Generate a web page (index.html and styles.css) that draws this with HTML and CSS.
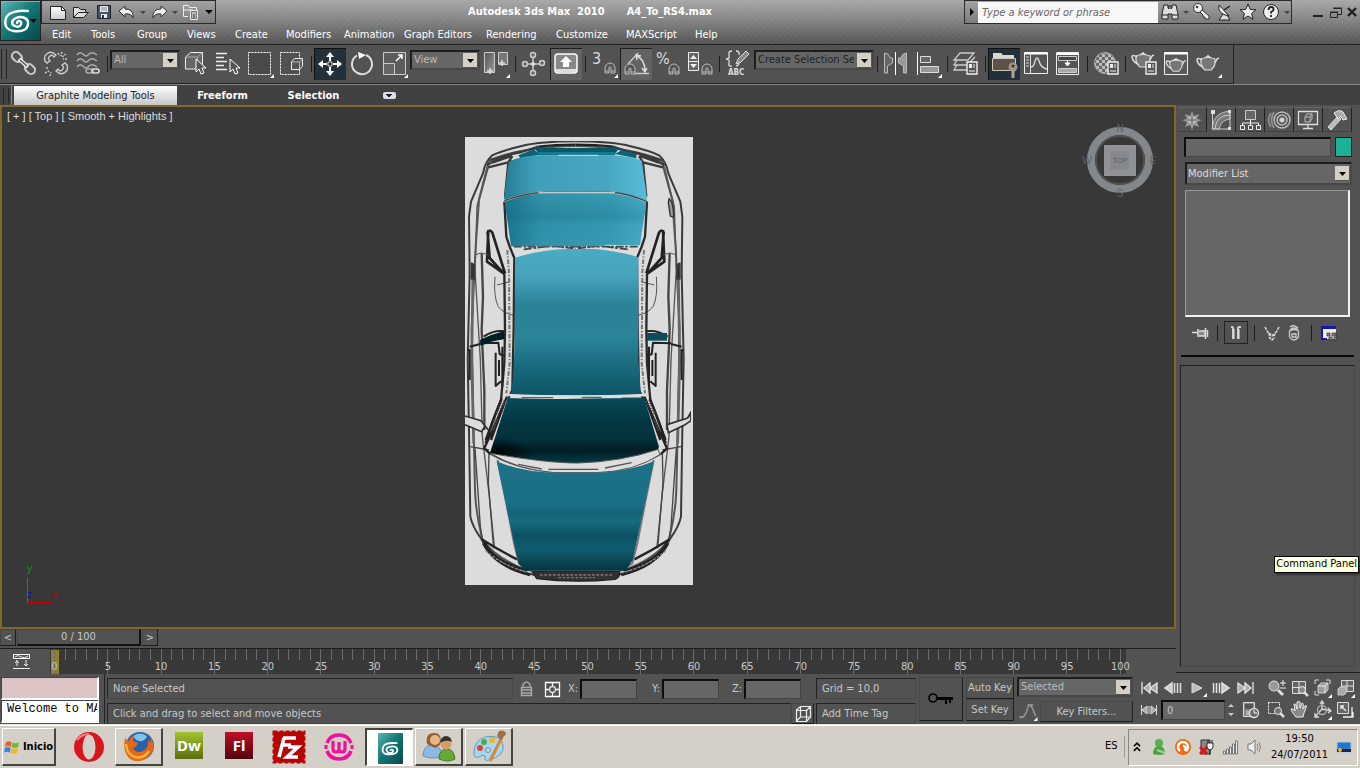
FILE: index.html
```html
<!DOCTYPE html>
<html lang="en">
<head>
<meta charset="utf-8">
<title>Autodesk 3ds Max 2010 - A4_To_RS4.max</title>
<link rel="stylesheet" href="styles.css">
</head>
<body>
<svg class="defs" aria-hidden="true">
  <defs>
    <linearGradient id="g-logo" x1="0" y1="0" x2="1" y2="1"><stop offset="0" stop-color="#5cb3ae"/><stop offset=".45" stop-color="#127a78"/><stop offset="1" stop-color="#07474b"/></linearGradient>
    <linearGradient id="g-metal" x1="0" y1="0" x2="1" y2="1"><stop offset="0" stop-color="#555"/><stop offset="1" stop-color="#999"/></linearGradient>
    <linearGradient id="g-white" x1="0" y1="0" x2="0" y2="1"><stop offset="0" stop-color="#fff"/><stop offset="1" stop-color="#ccc"/></linearGradient>
    <pattern id="checks" width="6" height="6" patternUnits="userSpaceOnUse"><rect width="6" height="6" fill="#666"/><path d="M0 0h3v3H0zM3 3h3v3H3z" fill="#bbb"/></pattern>
    <symbol id="swirl" viewBox="0 0 40 40"><path d="M32 9C22 8 9 9 6 16c-3 8 0 14 9 14 9 1 18-1 18-8 0-7-9-8-15-6-5 1-7 5-5 8 2 4 8 4 11 2 3-3 0-6-4-4" fill="none" stroke="#fff" stroke-width="3.400" stroke-linecap="round"/></symbol>
    <symbol id="magnet" viewBox="0 0 12 12"><path d="M1 11V6a5 5 0 0 1 10 0v5H7V6a1 1 0 0 0-2 0v5z" fill="#555" stroke="#bbb"/><path d="M1 9h4M7 9h4" stroke="#bbb"/></symbol>
    <symbol id="badge" viewBox="0 0 12 14"><path d="M1 1h10v12H1z" fill="#555" stroke="#eee" stroke-width="1.4"/><path d="M3 3h3v4H3z" fill="#eee"/><path d="M8 3v4M3 10h6" stroke="#eee"/></symbol>
    <symbol id="teapot" viewBox="0 0 24 18"><path d="M5 5q7-3 14 0 1 7-4 11H9Q4 12 5 5z" fill="#777" stroke="#ddd" stroke-width="1.2"/><path d="M6 6Q1 3 1 6q1 5 6 7M19 9l2-4 2-1M9 4q3-3 6 0M12 1v2" fill="none" stroke="#ddd" stroke-width="1.5"/></symbol>
  </defs>
</svg>

<header class="title-area">
  <button class="app-logo" aria-label="Application menu"><svg viewBox="0 0 40 40"><rect x="1" y="1" width="38" height="38" fill="url(#g-logo)"/><path d="M1 30L30 1M1 38L38 1M10 39L39 10M22 39L39 22" stroke="#0a5558" opacity=".35"/><path d="M27 10C18 9 7 11 5 17c-2 7 0 12 8 13 8 1 14-1 14-8 0-6-8-7-12-5-5 2-5 7-1 8 4 2 7-1 6-4-1-2-4-1-4 1" fill="none" stroke="#fff" stroke-width="2.4" stroke-linecap="round"/><path d="M29 18h7l-3.500 4z" fill="#000"/></svg></button>
  <div class="title-rows">
    <div class="title-row">
      <div class="chip qat">
        <button aria-label="New"><svg viewBox="0 0 22 22"><path d="M3.500 5.500h11l4 4v9h-15z" fill="url(#g-white)" stroke="#222"/><path d="M14.500 5.500v4h4" fill="none" stroke="#222"/></svg></button>
        <button aria-label="Open"><svg viewBox="0 0 22 22"><path d="M3.500 16.500v-10h5l2 2h5v3h3l-5 5z" fill="#ddd" stroke="#222"/><path d="M3.500 16.500l5-5h10" fill="none" stroke="#222"/></svg></button>
        <button aria-label="Save"><svg viewBox="0 0 22 22"><path d="M4.500 4.500h13v13h-13z" fill="#46536a" stroke="#1b2333"/><path d="M7 5h8v6H7zM8 13h6v4H8z" fill="#e8e8e8"/><path d="M8 7h6M8 9h6" stroke="#888"/><path d="M9 14h2v3H9z" fill="#333"/></svg></button>
        <button aria-label="Undo"><svg viewBox="0 0 22 22"><path d="M3 10l6-5v3q9 0 8 9-2-5-8-4v3z" fill="#eee" stroke="#333"/></svg></button>
        <span class="drop"></span>
        <button aria-label="Redo"><svg viewBox="0 0 22 22"><path d="M19 10l-6-5v3q-9 0-8 9 2-5 8-4v3z" fill="#eee" stroke="#333"/></svg></button>
        <span class="drop"></span>
        <button aria-label="Project folder"><svg viewBox="0 0 22 22"><path d="M3.500 4.500h5l1 2h7v4M8 15.500H3.500v-11" fill="none" stroke="#eee"/><path d="M4 9h9" stroke="#eee"/><path d="M10.500 9.500h7v9h-7z" fill="#777" stroke="#eee"/><path d="M12 12h4M12 14h1M15 14h1M12 16h1M15 16h1" stroke="#fff"/></svg></button>
        <span class="drop big"></span>
      </div>
      <h1 class="title"><span>Autodesk 3ds Max&nbsp; 2010</span><span>A4_To_RS4.max</span></h1>
      <div class="chip info">
        <span class="right-arrow"></span>
        <input class="help-search" type="text" placeholder="Type a keyword or phrase" aria-label="Search help">
        <button aria-label="Search"><svg viewBox="0 0 22 22"><path d="M5 4h4v3l1 1v-3h2v3l1-1V4h4l2 9v5h-6v-5h-4v5H3v-5z" fill="#ddd" stroke="#222"/><path d="M3 14h6M13 14h6" stroke="#222"/></svg></button>
        <span class="drop"></span>
        <button aria-label="Subscription"><svg viewBox="0 0 22 22"><circle cx="7" cy="7" r="4.500" fill="#eee" stroke="#333"/><path d="M9 11l2-2 7 6v3h-4v-2h-2v-2z" fill="#eee" stroke="#333"/><circle cx="6" cy="6" r="1.300" fill="#444"/></svg></button>
        <button aria-label="Communication"><svg viewBox="0 0 22 22"><path d="M9 13l-4 6h11l-3-5z" fill="#ddd" stroke="#222"/><path d="M5 4q-2 9 10 11z" fill="#eee" stroke="#222"/><path d="M10 9l6-4" stroke="#222" stroke-width="1.500"/></svg></button>
        <button aria-label="Favorites"><svg viewBox="0 0 22 22"><path d="M11 3l2.200 5.500 5.800.3-4.500 3.700 1.500 5.800-5-3.300-5 3.300 1.500-5.800L3 8.800l5.800-.3z" fill="#eee" stroke="#222"/></svg></button>
        <button aria-label="Help"><svg viewBox="0 0 22 22"><circle cx="11" cy="11" r="7.500" fill="#eee" stroke="#222"/><path d="M8.500 9q0-3 2.600-3 2.500 0 2.500 2.200 0 1.500-2.500 2.800v1.500M11 14v2" fill="none" stroke="#222" stroke-width="1.800"/></svg></button>
        <span class="drop"></span>
      </div>
      <div class="win-buttons">
        <button aria-label="Minimize"><svg viewBox="0 0 16 16"><path d="M3 12h10" stroke="#222" stroke-width="2"/></svg></button>
        <button aria-label="Restore"><svg viewBox="0 0 16 16"><path d="M6.500 4.500h8v6h-4M6 4h9" fill="none" stroke="#222"/><path d="M3.500 8.500h7v5h-7zM3 8h8" fill="none" stroke="#222"/></svg></button>
        <button aria-label="Close"><svg viewBox="0 0 16 16"><path d="M4 4l8 8M12 4l-8 8" stroke="#222" stroke-width="2.400"/></svg></button>
      </div>
    </div>
    <nav class="menu">
      <button>Edit</button><button>Tools</button><button>Group</button><button>Views</button><button>Create</button><button>Modifiers</button><button>Animation</button><button>Graph Editors</button><button>Rendering</button><button>Customize</button><button>MAXScript</button><button>Help</button>
    </nav>
  </div>
</header>

<div class="toolbar-strip">
  <div class="toolbar" role="toolbar" aria-label="Main toolbar">
    <span class="grip"></span>
    <button aria-label="Select and link"><svg viewBox="0 0 32 32"><g fill="none" stroke="#ccc" stroke-width="2"><rect x="-5.500" y="-4" width="11" height="8" rx="4" transform="translate(9 9) rotate(45)"/><rect x="-5.500" y="-4" width="11" height="8" rx="4" transform="translate(22 21) rotate(45)"/><path d="M11 11l9 8" stroke="#eee" stroke-width="4"/><path d="M12 12l7 6" stroke="#555" stroke-width="1.500"/></g></svg></button>
    <button aria-label="Unlink selection"><svg viewBox="0 0 32 32"><g fill="none" stroke="#ccc" stroke-width="1.400"><path d="M16 7q-4-4-8-2-5 3-3 8l2 2 3-2q-3-3 0-5 2-2 4 1zM16 23q4 4 8 2 5-3 3-8l-2-2-3 2q3 3 0 5-2 2-4-1z" fill="#555"/><path d="M18 5l2 3M22 4l-1 4M26 6l-4 3M27 11h-4M6 20h3M5 25l4-2M10 28l1-4" stroke-dasharray="2 1"/></g></svg></button>
    <button aria-label="Bind to space warp"><svg viewBox="0 0 32 32"><g fill="none" stroke="#aaa" stroke-width="1.600"><path d="M5 7q3-4 6-1 3 4 6 0 3-3 8 1M5 13q3-4 6-1 3 4 6 0 3-3 8 1M5 19q3-4 6-1 3 4 6 0 3-3 8 1"/><rect x="14" y="21" width="7" height="4" rx="2"/><rect x="20" y="21" width="7" height="4" rx="2" stroke="#ddd"/></g></svg></button>
    <span class="sep"></span>
    <select class="combo" aria-label="Selection filter"><option>All</option></select>
    <button aria-label="Select object"><svg viewBox="0 0 32 32"><path d="M5.500 9l5-4.500h12V16l-5 5h-12z" fill="#666" stroke="#eee"/><path d="M6 9h11.500L22 5M17.500 9v11" fill="none" stroke="#aaa"/><path d="M16 11v13l3-3 2 5 3-1-2-5h4z" fill="#555" stroke="#fff"/></svg></button>
    <button aria-label="Select by name"><svg viewBox="0 0 32 32"><path d="M4 5.500h11M4 9.500h8M4 13.500h11M4 17.500h8M4 21.500h11" stroke="#eee" stroke-width="1.400"/><path d="M18 11v13l3-3 2 5 3-1-2-5h4z" fill="#555" stroke="#fff"/></svg></button>
    <button aria-label="Rectangular selection region"><svg viewBox="0 0 32 32"><path d="M4.500 4.500h22v22h-22z" fill="#4a4a4a" stroke="#fff" stroke-dasharray="2 1"/><path d="M30 26v4h-4z" fill="#fff"/></svg></button>
    <button aria-label="Window crossing"><svg viewBox="0 0 32 32"><path d="M4.500 4.500h19v22h-19z" fill="none" stroke="#fff" stroke-dasharray="2 1"/><path d="M15.500 14l3-3.500h8V18l-3 3.500h-8z" fill="#555" stroke="#eee"/><path d="M16 14h7.500l3-3M23.500 14v7" fill="none" stroke="#bbb"/></svg></button>
    <span class="sep"></span>
    <button class="on" aria-label="Select and move" aria-pressed="true"><svg viewBox="0 0 32 32"><path d="M16 4l4 5h-3v4h-2V9h-3zM16 28l4-5h-3v-4h-2v4h-3zM4 16l5-4v3h4v2H9v3zM28 16l-5-4v3h-4v2h4v3z" fill="#fff"/><path d="M14 14h4v4h-4z" fill="#222" stroke="#ddd"/></svg></button>
    <button aria-label="Select and rotate"><svg viewBox="0 0 32 32"><path d="M11 7.500A10 10 0 1 0 20 7" fill="none" stroke="#ddd" stroke-width="2"/><path d="M12 4l8 3-7 4z" fill="#fff"/></svg></button>
    <button aria-label="Select and scale"><svg viewBox="0 0 32 32"><path d="M5.500 4.500h22v22h-22z" fill="#5c5c5c" stroke="#ccc"/><path d="M5.500 15.500h11v11h-11z" fill="#666" stroke="#ccc"/><path d="M18 13l6-6M20 7h4v4" stroke="#fff" stroke-width="1.500" fill="none"/><path d="M30 26v4h-4z" fill="#fff"/></svg></button>
    <select class="combo" aria-label="Reference coordinate system"><option>View</option></select>
    <button aria-label="Use pivot point center"><svg viewBox="0 0 32 32"><path d="M4.500 4.500h10v20h-10z" fill="url(#g-metal)" stroke="#ccc"/><path d="M18.500 4.500h9v12h-9z" fill="#777" stroke="#ccc"/><path d="M10 20v6M7 23h6M22 12v6M19 15h6" stroke="#ddd" stroke-width="1.500"/><path d="M30 26v4h-4z" fill="#fff"/></svg></button>
    <span class="sep"></span>
    <button aria-label="Select and manipulate"><svg viewBox="0 0 32 32"><path d="M15 8v14M6 16h19" stroke="#ccc" stroke-width="1.500"/><g fill="#666" stroke="#ccc" stroke-width="1.500"><circle cx="15" cy="7" r="2.500"/><circle cx="15" cy="25" r="2.500"/><circle cx="7" cy="16" r="2.500"/><circle cx="24" cy="15" r="2.500"/></g><circle cx="15" cy="16" r="2" fill="#ddd"/></svg></button>
    <button class="lit" aria-label="Keyboard shortcut override" aria-pressed="true"><svg viewBox="0 0 32 32"><rect x="5" y="6" width="22" height="19" rx="3" fill="#888" stroke="#fff" stroke-width="1.500"/><path d="M6 21h20v3H6z" fill="#ddd"/><path d="M16 8l6 6h-3v5h-6v-5h-3z" fill="#fff"/></svg></button>
    <span class="sep"></span>
    <button class="snap" aria-label="Snaps toggle"><span>3</span><svg viewBox="0 0 32 32"><use href="#magnet" x="16" y="14" width="12" height="12"/><path d="M30 26v4h-4z" fill="#fff"/></svg></button>
    <button class="lit" aria-label="Angle snap" aria-pressed="true"><svg viewBox="0 0 32 32"><path d="M8 16L18 5M15 25.500h14" stroke="#ccc" stroke-width="1.400"/><path d="M17 8q8 4 8 15M17 12l-1-5 5 1M22 20l3 4 2-4" fill="none" stroke="#ddd" stroke-width="1.400"/><use href="#magnet" x="4" y="15" width="12" height="12"/></svg></button>
    <button class="snap" aria-label="Percent snap"><span>%</span><svg viewBox="0 0 32 32"><use href="#magnet" x="16" y="15" width="12" height="12"/></svg></button>
    <button aria-label="Spinner snap"><svg viewBox="0 0 32 32"><path d="M4.500 4.500h10v18h-10zM4 13.500h11" fill="#666" stroke="#eee"/><path d="M6 11l3.500-4 3.500 4zM6 16h7l-3.500 4z" fill="#eee"/><use href="#magnet" x="17" y="15" width="12" height="12"/></svg></button>
    <span class="sep"></span>
    <button class="abc" aria-label="Edit named selection sets"><svg viewBox="0 0 32 32"><path d="M10 3Q6 3 7 7t-3 4q4 0 3 4t3 3M14 3q4 0 3 4M17 14q0 4-3 4" fill="none" stroke="#ddd" stroke-width="1.300"/><path d="M14 16l2-5 8-8 3 3-8 8z" fill="#888" stroke="#ddd"/></svg><span>ABC</span></button>
    <select class="combo wide" aria-label="Named selection sets"><option>Create Selection Set</option></select>
    <span class="sep"></span>
    <button aria-label="Mirror"><svg viewBox="0 0 32 32"><path d="M4.500 5v20h3v-7l5-3v-5h-2q-2-5-6-5z" fill="#666" stroke="#bbb"/><path d="M26.500 5v20h-3v-7l-5-3v-5h2q2-5 6-5z" fill="#999" stroke="#bbb"/><path d="M15.500 4v23" stroke="#fff"/></svg></button>
    <button aria-label="Align"><svg viewBox="0 0 32 32"><path d="M5.500 4v23" stroke="#fff"/><path d="M8.500 8.500h10v6h-10z" fill="#666" stroke="#ddd"/><path d="M8.500 18.500h18v6h-18z" fill="#999" stroke="#ddd"/><path d="M30 26v4h-4z" fill="#fff"/></svg></button>
    <span class="sep"></span>
    <button aria-label="Layers"><svg viewBox="0 0 32 32"><path d="M10 5h14l-6 7H4zM7 12l-3 5h13l8-8M7 17l-3 5h13" fill="none" stroke="#ccc" stroke-width="1.300"/><use href="#badge" x="16" y="13" width="12" height="14"/></svg></button>
    <span class="sep"></span>
    <button class="on" aria-label="Graphite tools" aria-pressed="true"><svg viewBox="0 0 32 32"><path d="M5 5h8l2 2h11v4H5z" fill="#ddd7cc"/><path d="M4.500 10.500h23v12h-23z" fill="#5d534b" stroke="#d0c8bd"/><circle cx="25" cy="19" r="4.500" fill="#a39583"/><path d="M23.500 22h3v8h-3z" fill="#b0a596"/><circle cx="25" cy="18" r="1.500" fill="#333"/></svg></button>
    <button aria-label="Curve editor"><svg viewBox="0 0 32 32"><path d="M4.500 4.500h23v21h-23z" fill="#555" stroke="#eee"/><path d="M4 5.500h24" stroke="#fff" stroke-width="2"/><path d="M10.500 5v20M6 9h3M6 12h3M6 15h3M6 18h3" stroke="#ddd"/><path d="M11 19q3 0 4-6 2-6 4 0 2 7 8 8" fill="none" stroke="#ddd" stroke-width="1.300"/></svg></button>
    <button aria-label="Schematic view"><svg viewBox="0 0 32 32"><path d="M4.500 4.500h22v22h-22z" fill="#555" stroke="#eee"/><path d="M4 6h23" stroke="#fff" stroke-width="2"/><path d="M6.500 8.500h18v4h-18z" fill="#444" stroke="#ccc"/><path d="M6.500 20.500h18v4h-18z" fill="#aaa" stroke="#ccc"/><path d="M15.500 12v4M13 15h5l-2.500 3z" fill="#fff" stroke="#fff"/></svg></button>
    <span class="sep"></span>
    <button aria-label="Material editor"><svg viewBox="0 0 32 32"><circle cx="15" cy="15" r="10.500" fill="url(#checks)" stroke="#aaa"/><use href="#badge" x="17" y="13" width="12" height="14"/></svg></button>
    <span class="sep"></span>
    <button aria-label="Render setup"><svg viewBox="0 0 32 32"><use href="#teapot" x="3" y="3" width="24" height="18"/><use href="#badge" x="17" y="13" width="12" height="14"/></svg></button>
    <button aria-label="Rendered frame window"><svg viewBox="0 0 32 32"><path d="M4.500 4.500h23v22h-23z" fill="#5a5a5a" stroke="#eee"/><path d="M4 5.500h24" stroke="#fff" stroke-width="2"/><use href="#teapot" x="5" y="9" width="22" height="16"/></svg></button>
    <button aria-label="Render production"><svg viewBox="0 0 32 32"><use href="#teapot" x="4" y="6" width="24" height="18"/><path d="M30 26v4h-4z" fill="#fff"/></svg></button>
  </div>
</div>

<div class="ribbon">
  <span class="grip"></span>
  <div class="ribbon-tabs" role="tablist">
    <button class="active" role="tab" aria-selected="true">Graphite Modeling Tools</button>
    <button role="tab">Freeform</button>
    <button role="tab">Selection</button>
    <button class="ribbon-min" aria-label="Minimize ribbon"></button>
  </div>
</div>

<main class="workspace">
  <section class="stage">
    <div class="viewport">
      <div class="view-label">[ + ] [ Top ] [ Smooth + Highlights ]</div>
      <svg class="car" viewBox="30 21 684 1344" role="img" aria-label="Car model over top view blueprint">
        <defs>
          <linearGradient id="trunk"><stop offset="0" stop-color="#277c92"/><stop offset=".22" stop-color="#409fb8"/><stop offset=".7" stop-color="#48a5bf"/><stop offset="1" stop-color="#57bdd8"/></linearGradient>
          <linearGradient id="rear"><stop offset="0" stop-color="#1c758c"/><stop offset=".25" stop-color="#3093aa"/><stop offset=".75" stop-color="#379bb3"/><stop offset="1" stop-color="#48abc6"/></linearGradient>
          <linearGradient id="shade" x1="0" y1="0" x2="0" y2="1"><stop offset="0" stop-color="#0a5a70" stop-opacity="0"/><stop offset=".45" stop-color="#0a5a70" stop-opacity=".22"/><stop offset=".6" stop-color="#0a5a70" stop-opacity=".05"/><stop offset="1" stop-color="#0a5a70" stop-opacity="0"/></linearGradient>
          <linearGradient id="roof" x1="0" y1="0" x2="0" y2="1"><stop offset="0" stop-color="#4babc4"/><stop offset=".18" stop-color="#48a3bc"/><stop offset=".38" stop-color="#2c8398"/><stop offset=".6" stop-color="#2c8499"/><stop offset=".8" stop-color="#196a7d"/><stop offset="1" stop-color="#0d5568"/></linearGradient>
          <linearGradient id="wind" x1="0" y1="0" x2="0" y2="1"><stop offset="0" stop-color="#084b59"/><stop offset=".35" stop-color="#033742"/><stop offset=".65" stop-color="#03313b"/><stop offset=".8" stop-color="#011e25"/><stop offset="1" stop-color="#053a45"/></linearGradient>
          <radialGradient id="corner" cx="0" cy=".85" r=".26"><stop offset="0" stop-color="#000"/><stop offset="1" stop-color="#000" stop-opacity="0"/></radialGradient>
          <linearGradient id="hood" x1="0" y1="0" x2="0" y2="1"><stop offset="0" stop-color="#1d7086"/><stop offset=".38" stop-color="#1c7086"/><stop offset=".48" stop-color="#136477"/><stop offset=".54" stop-color="#186c80"/><stop offset=".68" stop-color="#0b5263"/><stop offset=".8" stop-color="#105d70"/><stop offset="1" stop-color="#033540"/></linearGradient>
          <g id="half" fill="none" stroke="#3a3a3a" stroke-width="6" stroke-linejoin="round">
            <path d="M362 34Q260 34 200 48T112 76Q90 95 84 130L48 215 42 260 44 430 38 690 42 900 46 1160Q52 1190 78 1225 104 1280 200 1325L300 1350H362"/>
            <path d="M362 48Q240 50 160 72T100 108L72 210 62 350 50 600 56 900 60 1080Q62 1150 82 1228 120 1285 220 1322" stroke="#555"/>
            <path d="M250 50Q300 44 362 44" stroke="#222" stroke-width="7"/>
            <path d="M96 110L66 230 60 420 76 690 82 920 102 1090 118 1250" stroke="#555" stroke-width="4"/>
            <path d="M80 370L84 500 80 600 88 780 88 900" stroke="#444" stroke-width="7"/>
            <path d="M54 420L50 700 56 940" stroke="#666" stroke-width="8"/>
            <path d="M96 105Q150 72 200 66L250 50M100 112L195 88 160 98 150 200M172 78l-14 22M112 98l58-20M104 90l80-22" stroke-width="7"/>
            <path d="M100 300L96 395 146 430 104 384 98 308Q104 296 112 308L150 430" stroke="#222" stroke-width="8"/>
            <path d="M50 400v46h8v-40z" fill="#222"/>
            <path d="M62 374l16-5 22 5M120 440Q115 500 130 530 145 550 176 556M126 465l40-10" stroke="#555" stroke-width="3"/>
            <path d="M148 215L154 320 164 350 178 384 176 600 172 780 160 805M148 430L150 600 148 700 138 810 92 930" stroke="#2a2a2a" stroke-width="7"/>
            <path d="M157 360L162 430 164 700 154 790" stroke="#777" stroke-width="6" stroke-dasharray="14 5 4 5"/>
            <path d="M86 620Q116 600 148 604M44 650l32-8M76 640l54-2 4 35 14 4M122 668v100l16-14M132 690v48M142 650v120M38 660l6 0 0 90" stroke="#222"/>
            <path d="M46 950l56 10M102 965L100 1060 116 1255M60 955L76 1190 82 1230" stroke="#444" stroke-width="4"/>
            <path d="M156 800Q120 885 88 955L106 972M140 805Q108 880 92 940M148 820l-40 110" stroke="#222" stroke-width="7"/>
            <path d="M126 850l24-40M112 900l14-34" stroke="#555" stroke-width="10" stroke-dasharray="3 5"/>
            <path d="M105 972Q180 1016 290 1026H362M190 985Q260 1004 362 1006M206 1010l70 6" stroke="#444" stroke-width="4"/>
            <path d="M80 1228Q130 1260 186 1288M84 1240Q120 1310 225 1335M88 1235Q110 1290 216 1322" stroke="#222" stroke-width="7"/>
            <path d="M92 1262Q140 1306 220 1328" stroke="#888" stroke-width="4" stroke-dasharray="8 5"/>
            <path d="M128 990L154 1120 176 1235 192 1300 232 1326" stroke="#777" stroke-width="6"/>
            <path d="M176 350h186M206 358l84-10 72 8" stroke="#444" stroke-width="5" stroke-dasharray="24 6 8 4"/>
          </g>
          <filter id="soft" x="0" y="0" width="1" height="1"><feGaussianBlur stdDeviation="1.500"/></filter>
        </defs>
        <rect x="30" y="21" width="684" height="1344" fill="#dcdcdc"/>
        <g filter="url(#soft)"><use href="#half"/><use href="#half" transform="translate(724 0) scale(-1 1)"/>
          <path d="M30 858L78 872 90 888 80 905 30 884M78 872L100 900" fill="#dcdcdc" stroke="#333" stroke-width="5"/>
          <path d="M636 884L698 864 706 850 708 872 690 884 640 908z" fill="#dcdcdc" stroke="#333" stroke-width="5"/>
          <path d="M232 1324H492Q498 1340 480 1348 360 1360 245 1346z" fill="#333" stroke="#222" stroke-width="4"/>
          <path d="M255 1335h220M310 1343h110" stroke="#777" stroke-width="4" stroke-dasharray="8 5"/>
          <path d="M642 206q14 10 14 56l-10-4-6-40z" fill="#999" stroke="#333" stroke-width="4"/>
        </g>
        <path d="M238 54H492L478 76H254z" fill="#07596a"/><path d="M246 66H484L478 75H254z" fill="#15788c"/>
        <path d="M190 76l46-18 20 16-60 11zM480 72l20-12 44 12v13z" fill="#0a6478"/>
        <path d="M161 96Q200 76 255 76H475Q530 79 560 92L576 205 574 214Q520 188 460 183H270Q200 190 149 209L147 205z" fill="url(#trunk)"/>
        <path d="M149 215Q210 192 270 190H460Q530 196 574 218L555 346 450 344 448 349H168z" fill="url(#rear)"/>
        <path d="M149 215Q210 192 270 190H460Q530 196 574 218L555 346 450 344 448 349H168z" fill="url(#shade)"/>
        <path d="M148 212Q210 190 270 186H460Q520 190 576 215" fill="none" stroke="#444" stroke-width="4"/>
        <path d="M250 187H480M310 76H430" stroke="#ddd" stroke-width="3"/>
        <path d="M180 383Q260 358 340 357H420Q500 365 550 382V690L558 796H168Q176 740 179 640z" fill="url(#roof)"/>
        <path d="M160 795Q250 800 362 800T566 795" fill="none" stroke="#ddd" stroke-width="7"/><path d="M200 803h95M380 802h60M500 804h60" stroke="#444" stroke-width="3"/>
        <path d="M158 804Q260 808 362 806T568 804L612 950Q608 965 590 975 480 1000 370 1000 280 1000 200 985L105 970z" fill="url(#wind)"/>
        <path d="M158 804Q260 808 362 806T568 804L612 950Q608 965 590 975 480 1000 370 1000 280 1000 200 985L105 970z" fill="url(#corner)"/>
        <path d="M106 970Q280 1000 370 999 500 995 610 958L614 974Q540 1024 425 1028H300Q190 1020 106 970z" fill="#dedede" stroke="#555" stroke-width="3"/>
        <path d="M190 1003l70 14M280 1018H430M450 1014l80-16" stroke="#555" stroke-width="4"/>
        <path d="M125 994Q200 1026 300 1028H420Q520 1026 597 994L533 1290 512 1322H210L190 1300z" fill="url(#hood)"/>
        <path d="M75 630Q110 612 147 604V628Q110 632 77 648z" fill="#021e25"/><path d="M576 609H636V632H576z" fill="#0a4d5d"/>
      </svg>
      <svg class="cube" viewBox="0 0 76 80" role="img" aria-label="ViewCube: Top">
        <circle cx="38" cy="40" r="29" fill="none" stroke="#83878c" stroke-width="8"/><circle cx="38" cy="40" r="24" fill="none" stroke="#5c5f63"/><path d="M22 25h32v31H22z" fill="#8f9398"/><path d="M28 31h19v19H28z" fill="#85898e"/>
        <g font-family="Liberation Sans, sans-serif" fill="#555a62" text-anchor="middle"><text x="38" y="43" font-size="7">TOP</text><g font-size="10" fill="#5d636b"><text x="38" y="12">N</text><text x="38" y="77">S</text><text x="5" y="44">W</text><text x="71" y="44">E</text></g></g>
      </svg>
      <svg class="axis" viewBox="0 0 36 44" role="img" aria-label="World axis"><path d="M2.500 15v25" stroke="#0a9a0a"/><path d="M3 39.500h24" stroke="#d00000"/><g font-family="Liberation Sans, sans-serif" font-size="10"><text x="2" y="9" fill="#0a9a0a">y</text><text x="2" y="35" fill="#1010d0">z</text><text x="28" y="35" fill="#c00000">x</text></g></svg>
    </div>
    <div class="time-slider">
      <button aria-label="Previous frame">&lt;</button><button class="thumb">0 / 100</button><button aria-label="Next frame">&gt;</button>
    </div>
    <div class="trackbar">
      <button class="curve-toggle" aria-label="Open mini curve editor"><svg viewBox="0 0 20 18"><path d="M1.500 1.500h16v4h-16z" fill="none" stroke="#fff"/><path d="M3 4q3-3 6 0 4 2 7-1M1 15.500h17M5 7v6M3 10l2-2 2 2M14 7v6M12 11l2 2 2-2" fill="none" stroke="#eee"/></svg></button>
      <div class="track"><span class="frame-marker"></span><div class="ticks" id="ticks"></div><div class="frame-labels" id="frames"></div></div>
    </div>
  </section>

  <aside class="command-panel">
    <div class="panel-tabs" role="tablist">
      <button role="tab" aria-label="Create"><svg viewBox="0 0 24 24"><path d="M12 3l2 5 5-2-2 5 5 1-5 2 2 5-5-2-2 5-2-5-5 2 2-5-5-2 5-1-2-5 5 2z" fill="#999"/><circle cx="12" cy="12" r="4" fill="#bbb"/><path d="M12 8v8M8 12h8" stroke="#555"/></svg></button>
      <button class="active" role="tab" aria-label="Modify" aria-selected="true"><svg viewBox="0 0 24 24"><path d="M3 21Q4 4 21 3v8q-9 1-11 10z" fill="#777" stroke="#bbb"/><path d="M6 21Q7 7 21 7M3.500 3v18H21V3" fill="none" stroke="#ccc"/><path d="M2 2h4v4H2zM19 2h3v3h-3zM19 19h3v3h-3z" fill="#ddd"/></svg></button>
      <button role="tab" aria-label="Hierarchy"><svg viewBox="0 0 24 24"><path d="M7.500 2.500h10v9h-10z" fill="#666" stroke="#ccc"/><path d="M12.500 12v6M4.500 18v-3h16v3M2.500 17.500h4v4h-4zM10.500 17.500h4v4h-4zM18.500 17.500h4v4h-4z" fill="none" stroke="#eee"/></svg></button>
      <button role="tab" aria-label="Motion"><svg viewBox="0 0 24 24"><g fill="none" stroke="#bbb" stroke-width="1.500"><circle cx="15" cy="12" r="8"/><circle cx="15" cy="12" r="5"/><circle cx="15" cy="12" r="2" fill="#eee"/><path d="M7 4q-5 8 0 16M4 5q-5 7 0 14" stroke="#999"/></g></svg></button>
      <button role="tab" aria-label="Display"><svg viewBox="0 0 24 24"><path d="M2.500 3.500h19v13h-19zM7 20.500h10M12 17v3" fill="#555" stroke="#ddd" stroke-width="1.300"/><path d="M9 9l2-3h5v5l-2 3H9zM9 9h5l2-3M14 9v5" fill="none" stroke="#bbb"/></svg></button>
      <button role="tab" aria-label="Utilities"><svg viewBox="0 0 24 24"><path d="M3 19L13 8l3 3L6 22z" fill="#bbb" stroke="#ddd"/><path d="M9 5q5-4 9-1l4 7-4 1-2-4-3 3z" fill="#aaa" stroke="#eee"/></svg></button>
    </div>
    <div class="name-row"><input class="field" type="text" aria-label="Object name"><button class="swatch" aria-label="Object color"></button></div>
    <select class="combo modifier" aria-label="Modifier List"><option>Modifier List</option></select>
    <div class="stack"></div>
    <div class="stack-tools">
      <button aria-label="Pin stack"><svg viewBox="0 0 22 22"><path d="M3 10.500h6M9 7v8M10 9h6v5h-6M16.500 6v11M18.500 8v7" stroke="#ddd" stroke-width="1.500" fill="#888"/></svg></button><i></i>
      <button class="boxed" aria-label="Show end result"><svg viewBox="0 0 22 22"><path d="M8 5v12M13 5v12M6 5h2M13 5h3" stroke="#ccc" stroke-width="2"/><path d="M9 7v10M14 7v10" stroke="#eee"/></svg></button><i></i>
      <button aria-label="Make unique"><svg viewBox="0 0 22 22"><path d="M4 5l5 9M18 5l-5 9M8 11l3 3 3-3M8 15l3 3 3-3" stroke="#ddd" stroke-width="1.500" fill="none" stroke-dasharray="3 1"/></svg></button>
      <button aria-label="Remove modifier"><svg viewBox="0 0 22 22"><path d="M6.500 9v6q4 6 9 0V9q-4-3-9 0zM7 5q4-3 8 1M7 8q4-4 8 0M9 12h4v3H9z" stroke="#ccc" fill="none" stroke-width="1.300"/></svg></button><i></i>
      <button aria-label="Configure modifier sets"><svg viewBox="0 0 22 22"><path d="M4 4h14v13H4z" fill="#eee"/><path d="M4 4h14v3H4z" fill="#1717b5"/><path d="M4 4v13h5" stroke="#1717b5" stroke-width="2" fill="none"/><path d="M9 11h3v3H9zM14 11h4v3h-4zM11 15h3v3h-3zM16 15h3v3h-3z" fill="#888" stroke="#222" stroke-width=".7"/></svg></button>
    </div>
    <div class="rollouts"></div>
  </aside>
</main>

<footer class="status">
  <div class="listener"><input class="macro" type="text" aria-label="Macro recorder"><input class="script" type="text" value="Welcome to MAXScript" aria-label="MAXScript listener"></div>
  <div class="prompt">
    <div class="prompt-row coords">
      <output class="cell grow">None Selected</output>
      <button aria-label="Selection lock"><svg viewBox="0 0 22 22"><path d="M6.500 9.500h10v8h-10zM8 9V6.500q3.500-5 7 0V9M7 12h9M7 15h9" fill="none" stroke="#aaa" stroke-width="1.400"/></svg></button>
      <button aria-label="Absolute mode"><svg viewBox="0 0 22 22"><path d="M4.500 4.500h14v14h-14zM11.500 4v15M4 11.500h15" fill="none" stroke="#fff" stroke-width="1.300"/><circle cx="11.500" cy="11.500" r="3" fill="#555" stroke="#ddd" stroke-width="1.300"/></svg></button>
      <label>X:<input class="field" type="text"></label>
      <label>Y:<input class="field" type="text"></label>
      <label>Z:<input class="field" type="text"></label>
    </div>
    <div class="prompt-row">
      <output class="cell grow">Click and drag to select and move objects</output>
      <button class="raised" aria-label="Adaptive degradation"><svg viewBox="0 0 22 22"><path d="M4.500 7l4-3.500h10V14l-4 4.500h-10zM4.500 7.500h10v11M14.500 7.500l4-4M8.500 4v10h9M8.500 14l-4 4" fill="none" stroke="#eee" stroke-width="1.200"/></svg></button>
    </div>
  </div>
  <div class="stackcol grid-info"><output class="cell">Grid = 10,0</output><button class="cell">Add Time Tag</button></div>
  <button class="raised set-keys" aria-label="Set keys"><svg viewBox="0 0 28 14"><circle cx="6" cy="6" r="4" fill="none" stroke="#000" stroke-width="1.600"/><path d="M10 5h16v3h-2v3h-2V8h-2v4h-2V8h-8z" fill="#000"/></svg></button>
  <div class="stackcol keys"><button class="raised">Auto Key</button><button class="raised">Set Key</button></div>
  <div class="stackcol filters">
    <select class="combo" aria-label="Key set"><option>Selected</option></select>
    <div class="filter-row"><button aria-label="Default tangents"><svg viewBox="0 0 22 22"><path d="M2 16q4 2 7-5 2-8 4-7 3 4 5 11M2 16h5M10 4h6" fill="none" stroke="#999" stroke-width="1.500"/><path d="M20 16v4h-4z" fill="#fff"/></svg></button><button class="raised grow">Key Filters...</button></div>
  </div>
  <div class="playback">
    <div class="play-row">
      <button aria-label="Go to start"><svg viewBox="0 0 22 22"><path d="M4 5v12M12 6v10l-6-5zM19 6v10l-7-5z" fill="#aaa" stroke="#ddd" stroke-width="1.400"/></svg></button>
      <button aria-label="Previous frame"><svg viewBox="0 0 22 22"><path d="M10 6v10l-7-5zM12.500 6v10M15.500 6v10M18.500 6v10" fill="#ccc" stroke="#ddd" stroke-width="1.600"/></svg></button>
      <button aria-label="Play"><svg viewBox="0 0 22 22"><path d="M6 6v10l10-5z" fill="#bbb" stroke="#ddd"/><path d="M21 16v4h-4z" fill="#fff"/></svg></button>
      <button aria-label="Next frame"><svg viewBox="0 0 22 22"><path d="M12 6v10l7-5zM9.500 6v10M6.500 6v10M3.500 6v10" fill="#ccc" stroke="#ddd" stroke-width="1.600"/></svg></button>
      <button aria-label="Go to end"><svg viewBox="0 0 22 22"><path d="M18 5v12M10 6v10l6-5zM3 6v10l7-5z" fill="#aaa" stroke="#ddd" stroke-width="1.400"/></svg></button>
    </div>
    <div class="play-row">
      <button aria-label="Key mode"><svg viewBox="0 0 22 22"><path d="M3.500 6v10M18.500 6v10M9 7v8l-5-4zM13 7v8l5-4zM11 7v8" fill="#aaa" stroke="#ddd"/></svg></button>
      <input class="field frame" type="text" value="0" aria-label="Current frame"><div class="spin"><button aria-label="Increase"></button><button aria-label="Decrease"></button></div>
      <button aria-label="Time configuration"><svg viewBox="0 0 22 22"><path d="M4.500 3.500h11v14h-11z" fill="#888" stroke="#ddd"/><path d="M6 5h8v5H6z" fill="#555"/><path d="M7 13h3M7 15h3" stroke="#ddd"/><circle cx="15" cy="14" r="4.500" fill="#666" stroke="#ddd" stroke-width="1.400"/><path d="M15 11v3h3" stroke="#fff" fill="none"/></svg></button>
    </div>
  </div>
  <div class="nav-tools">
    <button aria-label="Zoom"><svg viewBox="0 0 22 22"><circle cx="8" cy="9" r="5" fill="#999" stroke="#ddd"/><path d="M12 13l5 5" stroke="#ddd" stroke-width="3"/><path d="M14 6h6M17 3v6M14 11h6" stroke="#eee"/></svg></button>
    <button aria-label="Zoom all"><svg viewBox="0 0 22 22"><path d="M3.500 4.500h13v12h-13zM10 4v13M3 10.500h14" fill="#666" stroke="#ddd"/><circle cx="13" cy="13" r="3.500" fill="#888" stroke="#eee"/><path d="M15 15l4 4" stroke="#ddd" stroke-width="2.500"/></svg></button>
    <button aria-label="Zoom extents"><svg viewBox="0 0 22 22"><path d="M3 7V3h4M14 3h4v4M3 14v4h4" fill="none" stroke="#ddd"/><path d="M6 9l3-3h7v7l-3 3H6z" fill="#999" stroke="#ccc"/><path d="M6 9h7v7M13 9l3-3" fill="none" stroke="#eee"/><path d="M20 17v4h-4z" fill="#fff"/></svg></button>
    <button aria-label="Zoom extents all"><svg viewBox="0 0 22 22"><path d="M6.500 3.500h12v11h-12zM12 4v10M7 9h12" fill="#666" stroke="#ddd"/><path d="M3 12l2-2h6v6l-2 2H3z" fill="#aaa" stroke="#ccc"/><path d="M20 17v4h-4z" fill="#fff"/></svg></button>
    <button aria-label="Region zoom"><svg viewBox="0 0 22 22"><path d="M2.500 3.500h11v11h-11z" fill="none" stroke="#eee" stroke-dasharray="2 1"/><circle cx="12" cy="12" r="3.500" fill="#777" stroke="#ddd"/><path d="M14 14l4 4" stroke="#ddd" stroke-width="2.500"/></svg></button>
    <button aria-label="Pan"><svg viewBox="0 0 22 22"><path d="M7 18q-5-6-5-8 2-1 4 2L5 5q2-1 3 5V3q2-1 3 0v6l2-5q2 0 1 6l3-4q1 2-2 8l-1 4z" fill="#888" stroke="#eee"/></svg></button>
    <button aria-label="Orbit"><svg viewBox="0 0 22 22"><path d="M10 10V3M10 10l9 2M10 10l-7 8M8 5l2-3 2 3M16 9l3 3-3 2M3 14v4h4" fill="none" stroke="#ddd" stroke-width="1.300"/><circle cx="10" cy="11" r="4.500" fill="none" stroke="#aaa" stroke-width="1.500"/><path d="M20 17v4h-4z" fill="#fff"/></svg></button>
    <button aria-label="Maximize viewport"><svg viewBox="0 0 22 22"><path d="M2.500 3.500h11v11h-11z" fill="#666" stroke="#ddd"/><path d="M17 8v10H8M13 18h5v-5M11 12L6 7M6 10V7h3" fill="none" stroke="#eee" stroke-width="1.300"/></svg></button>
  </div>
</footer>

<div class="taskbar">
  <button class="start"><svg viewBox="0 0 18 18"><path d="M2 4q3-2 6 0l-1 5q-3-2-6 0z" fill="#e8602c"/><path d="M9 4q3 2 7 0l-1 5q-4 2-7 0z" fill="#79b83b"/><path d="M1 10q3-2 6 0l-1 5q-3-2-6 0z" fill="#3d83d6"/><path d="M8 10q3 2 7 0l-1 5q-4 2-7 0z" fill="#f2b919"/></svg>Inicio</button>
  <div class="tasks">
    <button aria-label="Opera"><svg viewBox="0 0 34 34"><ellipse cx="17" cy="17" rx="15" ry="15" fill="#d8151b"/><ellipse cx="17" cy="17" rx="6.500" ry="12.500" fill="#d4d0c8"/><path d="M5 10Q10 4 17 4" stroke="#ff8080" stroke-width="2" fill="none"/></svg></button>
    <button class="win" aria-label="Firefox"><svg viewBox="0 0 34 34"><circle cx="18" cy="16" r="14" fill="#2a62a8"/><path d="M11 6q7-5 14 0-2 6-8 5-4-1-6-5z" fill="#7ec4ea"/><path d="M3 8q1 2 4 3 2-5 5-5l-1 5 5 2q-1 4-5 5 3 6 10 3 6-3 5-11l3 3-1-6q7 10 0 18-8 9-18 5Q0 25 3 8z" fill="#e3681a"/><path d="M4 14q1 11 9 13 9 2 14-6" fill="none" stroke="#f9b233" stroke-width="2.500"/></svg></button>
    <button aria-label="Dreamweaver"><span class="adobe dw">Dw</span></button>
    <button aria-label="Flash"><span class="adobe fl">Fl</span></button>
    <button aria-label="FileZilla"><svg viewBox="0 0 34 34"><path d="M1.500 1.500h31v31h-31z" fill="#b80404" stroke="#b80404" stroke-width="2" stroke-dasharray="4 2"/><path d="M11 8h13M11 15h8M12 8L7 27M16 17h10L15 27h11" fill="none" stroke="#fff" stroke-width="3.600"/></svg></button>
    <button aria-label="WampServer"><svg viewBox="0 0 34 34"><path d="M5 13Q8 5 17 5t12 8M5 21q3 8 12 8t12-8" fill="none" stroke="#f0109a" stroke-width="3.600"/><path d="M4 15v4M30 15v4" stroke="#f0109a" stroke-width="3"/><path d="M11 11v8q0 3 3 3t3-3v-7M17 19q0 3 3 3t3-3v-8" fill="none" stroke="#f0109a" stroke-width="3.200"/></svg></button>
    <button class="win pressed" aria-label="3ds Max"><svg viewBox="0 0 34 34"><rect x="5" y="2" width="25" height="31" rx="1" fill="url(#g-logo)"/><use href="#swirl" x="7" y="6" width="21" height="24"/></svg></button>
    <button class="win" aria-label="Messenger"><svg viewBox="0 0 34 34"><path d="M1 26q0-11 10-11 8 0 9 11-9 4-19 0z" fill="#8db9e4" stroke="#668fbb"/><path d="M5 14Q3 3 12 3q9 0 6 12l-5 3z" fill="#94602f"/><circle cx="13" cy="10" r="5" fill="#e7b887"/><path d="M17 29q0-10 8-10 7 0 8 10-7 4-16 0z" fill="#67a83a" stroke="#447c22"/><circle cx="24" cy="14" r="5.500" fill="#d69c68"/><path d="M18 13q1-7 6-7t6 6q-6-3-12 1z" fill="#333"/></svg></button>
    <button class="win" aria-label="Paint"><svg viewBox="0 0 34 34"><path d="M13 7Q29 4 31 15t-14 15q-5 2-4-4-3-2-6 1-6 2-5-6Q3 10 13 7z" fill="#a7d6f0" stroke="#5c9cc9"/><circle cx="8" cy="18" r="3" fill="#d84531"/><circle cx="12" cy="12" r="3" fill="#4cab45"/><circle cx="20" cy="10" r="3" fill="#f0b726"/><circle cx="16" cy="20" r="2.500" fill="#d4d0c8" stroke="#5c9cc9"/><path d="M30 7L18 31" stroke="#e28325" stroke-width="3"/><path d="M25 6l2-5q6-2 7 3l-5 6z" fill="#a36e42"/></svg></button>
  </div>
  <div class="lang">ES</div>
  <div class="tray">
    <svg class="small" viewBox="0 0 18 18"><path d="M5 8l4-4 4 4M5 14l4-4 4 4" fill="none" stroke="#000" stroke-width="2"/></svg>
    <svg viewBox="0 0 18 18"><circle cx="9" cy="5" r="4" fill="#56ae4d"/><path d="M3 16q0-8 6-8t6 8q-6 2-12 0z" fill="#4ba344"/><path d="M7 12l8 3" stroke="#9ed494" stroke-width="2"/></svg>
    <svg viewBox="0 0 18 18"><circle cx="9" cy="9" r="8" fill="#ee6b12"/><path d="M6 13a5 5 0 1 1 6 0M9 8q4 0 2 5" fill="none" stroke="#fff" stroke-width="2.400"/></svg>
    <svg viewBox="0 0 18 18"><path d="M3 2h9v14H3z" fill="#888" stroke="#333"/><path d="M9 5h6v4q-1 3-3 3t-3-3zM10 2v3M14 2v3M12 12v5" fill="#fff" stroke="#222"/><path d="M2 9l7 7M9 9l-7 7" stroke="#e0121a" stroke-width="2.800"/></svg>
    <svg viewBox="0 0 18 18"><path d="M1.500 13h2v3h-2zM4.500 11h2v5h-2zM7.500 9h2v7h-2zM10.500 6h2v10h-2zM13.500 3h2v13h-2z" fill="#eee" stroke="#777"/></svg>
    <svg viewBox="0 0 18 18"><path d="M2 6h3l4-4v14l-4-4H2z" fill="#eee" stroke="#777"/><path d="M11 6q2 3 0 6M13 4q3 5 0 10" fill="none" stroke="#888"/></svg>
    <time class="clock" datetime="2011-07-24T19:50"><span>19:50</span><span>24/07/2011</span></time>
    <svg viewBox="0 0 18 18"><path d="M2 4h14v10H2z" fill="#2875d0" stroke="#a8c8e8"/><path d="M2 11h14v3H2z" fill="#224"/><circle cx="5" cy="12" r="2" fill="#f0b726"/></svg>
  </div>
</div>
<div class="tooltip" role="tooltip">Command Panel</div>
<script src="app.js"></script>
</body>
</html>
```

FILE: styles.css
```css
* { box-sizing: border-box; }
body {
  margin: 0; min-height: 100vh; display: flex; flex-direction: column;
  position: relative; overflow: hidden;
  background: #525252; color: #c8c8c8;
  font: 11px/14px "DejaVu Sans Condensed", "Noto Sans", sans-serif;
}
button, input, select { font: inherit; color: inherit; margin: 0; padding: 0; border: 0; background: none; border-radius: 0; }
button { display: flex; align-items: center; justify-content: center; flex: none; white-space: nowrap; }
svg { display: block; flex: none; }
.defs { position: absolute; width: 0; height: 0; }

/* title bar and menus */
.title-area { display: flex; height: 45px; border-bottom: 1px solid #222; background: repeating-linear-gradient(135deg, rgba(255,255,255,.04) 0 1px, transparent 1px 4px), linear-gradient(#a8a8a8, #858585 45%, #545454); }
.app-logo { width: 41px; height: 41px; border: 1px solid #222; }
.app-logo svg { width: 40px; height: 40px; }
.title-rows { flex: 1; display: flex; flex-direction: column; }
.title-row { display: flex; align-items: center; height: 24px; }
.chip { display: flex; align-items: center; height: 24px; border: 1px solid #2a2a2a; background: linear-gradient(#a2a2a2, #7c7c7c); }
.qat { width: 175px; padding-left: 4px; }
.chip button { width: 23px; height: 22px; }
.chip svg { width: 22px; height: 22px; }
.drop { flex: none; width: 9px; height: 22px; display: flex; align-items: center; justify-content: center; }
.drop::after { content: ""; border: 3px solid transparent; border-top-color: #444; border-bottom: 0; }
.drop.big { width: 14px; }
.drop.big::after { border-width: 4px 4px 0; border-top-color: #000; }
.title { flex: 1; display: flex; justify-content: center; gap: 22px; margin: 0; color: #fff; font: bold 11px/14px "DejaVu Sans Condensed", sans-serif; white-space: nowrap; }
.info { width: 328px; }
.right-arrow { width: 13px; display: flex; justify-content: center; }
.right-arrow::after { content: ""; border: 4px solid transparent; border-left-color: #000; border-right: 0; }
.help-search { flex: 1; min-width: 0; height: 21px; padding: 2px 4px; background: #f7f7f7; color: #555; font-style: italic; }
.help-search::placeholder { color: #666; opacity: 1; }
.win-buttons { display: flex; width: 68px; padding-left: 17px; }
.win-buttons button { width: 17px; }
.win-buttons svg { width: 16px; height: 16px; }
.menu { display: grid; grid-template-columns: 39px 46px 50px 48px 51px 58px 60px 82px 70px 70px 69px auto; justify-content: start; justify-items: start; height: 20px; align-items: end; padding: 0 0 2px 11px; color: #fff; }

/* main toolbar */
.toolbar-strip { display: flex; height: 39px; background: #525252; }
.toolbar { display: flex; align-items: center; width: 1234px; border-right: 1px solid #222; border-bottom: 1px solid #222; }
.toolbar > button { width: 32px; height: 32px; }
.toolbar svg { width: 32px; height: 32px; }
.grip { flex: none; width: 8px; height: 30px; display: flex; justify-content: center; }
.grip::before { content: ""; width: 4px; border: solid #222; border-width: 0 1px; }
.sep { flex: none; width: 4px; height: 16px; margin-right: 2px; border-right: 1px solid #1d1d1d; }
.on { background: #22303b; box-shadow: inset 1px 1px #111; }
.lit { background: #626262; box-shadow: inset 1px 1px #1d1d1d; }
.toolbar .snap { display: grid; }
.snap > *, .abc > * { grid-area: 1 / 1; }
.snap span { place-self: start; padding-left: 4px; font: 16px/22px "DejaVu Sans Condensed", sans-serif; color: #ddd; }
.toolbar .abc { display: grid; }
.abc span { place-self: end start; padding: 0 0 3px 6px; font: bold 8px/8px "DejaVu Sans Condensed", sans-serif; color: #ddd; }
.combo {
  appearance: none; flex: none; width: 70px; height: 20px; padding: 0 18px 0 2px; margin-bottom: 8px;
  color: #bbb; border: 2px solid #1d1d1d; border-right-color: #484848; border-bottom-color: #484848;
  background: url("data:image/svg+xml,%3Csvg xmlns='http://www.w3.org/2000/svg' width='15' height='15'%3E%3Cpath d='M0 0h15v15H0z' fill='%23d4d0c8'/%3E%3Cpath d='M0 14.500h14.500V0' fill='none' stroke='%23555'/%3E%3Cpath d='M4 6h7l-3.500 4z'/%3E%3C/svg%3E") right center no-repeat, #666;
}
.combo.wide { width: 120px; color: #222; }

/* ribbon */
.ribbon { display: flex; height: 21px; border-top: 1px solid #888; background: #414141; }
.ribbon .grip { width: 11px; height: 18px; padding-top: 3px; }
.ribbon-tabs { flex: 1; display: flex; border-left: 1px solid #888; padding: 1px 0 0 2px; }
.ribbon-tabs button { width: 91px; color: #fff; font-weight: bold; }
.ribbon-tabs .active { width: 163px; color: #222; font-weight: normal; background: linear-gradient(#fff, #c6c6c6); }
.ribbon-tabs .ribbon-min { width: 60px; }
.ribbon-min::before { content: ""; width: 13px; height: 7px; border-radius: 2px; background: conic-gradient(from -45deg at 50% 80%, #222 90deg, transparent 0) center 2px / 6px 4px no-repeat, #dde; }

/* workspace */
.workspace { flex: 1; display: flex; min-height: 0; }
.stage { flex: 1; min-width: 0; display: flex; flex-direction: column; }
.viewport { flex: 1; position: relative; display: flex; justify-content: center; align-items: flex-start; padding: 30px 18px 0 0; border: 2px solid #7f682a; background: #383838; }
.view-label { position: absolute; left: 5px; top: 2px; font: 11px/14px "Liberation Sans", sans-serif; color: #ddd; }
.car { width: 228px; height: 448px; }
.cube { position: absolute; right: 16px; top: 13px; width: 76px; height: 80px; }
.axis { position: absolute; left: 23px; bottom: 20px; width: 36px; height: 44px; }
.time-slider { display: flex; height: 19px; gap: 1px; }
.time-slider button { width: 16px; height: 17px; border: 1px solid #444; border-right-color: #1d1d1d; border-bottom-color: #1d1d1d; }
.time-slider .thumb { width: 124px; border-right: 2px solid #111; border-bottom: 2px solid #111; }
.trackbar { display: flex; height: 26px; border-top: 1px solid #1d1d1d; padding-right: 50px; }
.curve-toggle { width: 50px; padding-right: 6px; }
.curve-toggle svg { width: 20px; height: 18px; }
.track { flex: 1; position: relative; display: grid; background: #383838; padding: 0 5px 0 4px; }
.ticks, .frame-labels { grid-area: 1 / 1; display: flex; justify-content: space-between; position: relative; }
.ticks i { width: 1px; height: 11px; background: #6c6c6c; }
.ticks i.major { height: 25px; }
.frame-labels { align-items: flex-end; }
.frame-labels span { width: 1px; display: flex; justify-content: center; }
.frame-marker { position: absolute; left: 1px; top: 1px; bottom: 0; width: 8px; background: #8f8326; }

/* command panel */
.command-panel { width: 184px; flex: none; display: flex; flex-direction: column; padding: 2px 5px 5px 4px; border-bottom: 1px solid #1d1d1d; margin-bottom: 1px; }
.panel-tabs { display: flex; height: 25px; margin: 0 -3px 0 -2px; }
.panel-tabs button { width: 29px; border-right: 1px solid #222; border-bottom: 1px solid #404040; border-top: 1px solid #666; }
.panel-tabs .active { border-bottom-color: #525252; }
.panel-tabs svg { width: 24px; height: 24px; }
.name-row { display: flex; gap: 4px; margin: 5px 3px 5px 4px; }
.field { min-width: 0; height: 20px; padding: 0 4px; background: #666; border: 2px solid #0d0d0d; border-right: 1px solid #444; border-bottom: 1px solid #444; }
.name-row .field { flex: 1; }
.swatch { width: 17px; height: 20px; background: #1bb196; border: 1px solid #222; }
.modifier { width: auto; height: 23px; margin: 0 3px 5px 5px; padding-left: 1px; color: #ddd; }
.stack { height: 127px; margin: 0 5px 0 5px; background: #666; border: 2px solid #f4f2ee; border-top: 1px solid #999; border-left: 1px solid #999; }
.stack-tools { display: flex; align-items: center; height: 31px; padding-left: 9px; }
.stack-tools svg { width: 22px; height: 22px; }
.stack-tools i { width: 1px; height: 16px; background: #1d1d1d; margin: 0 6px; }
.stack-tools .boxed { width: 24px; height: 23px; border: 1px solid #222; }
.rollouts { flex: 1; position: relative; margin-top: 17px; border: 1px solid #484848; border-top-color: #1d1d1d; border-left-color: #1d1d1d; }
.rollouts::before { content: ""; position: absolute; left: 0; right: 0; top: -11px; height: 2px; background: #0a0a0a; }

/* status bar */
.status { display: flex; height: 50px; }
.listener { width: 105px; padding: 3px 6px 1px 1px; display: flex; flex-direction: column; border-right: 1px solid #222; }
.listener input { width: 98px; height: 23px; padding: 0 0 4px 5px; border: 1px solid #444; border-right: 2px solid #fff; border-bottom: 2px solid #fff; background: #fff; color: #000; font: 12px/14px "Liberation Mono", monospace; }
.listener .macro { background: #dcc3c5; }
.prompt { flex: 1; min-width: 0; padding: 4px 2px 0; display: flex; flex-direction: column; gap: 4px; }
.prompt-row { display: flex; height: 21px; align-items: center; }
.prompt-row.coords { padding-right: 13px; }
.cell { display: flex; align-items: center; justify-content: flex-start; height: 21px; padding-left: 5px; border: 1px solid #484848; border-top-color: #222; border-left-color: #222; }
.grow { flex: 1; min-width: 0; }
.prompt-row button { width: 26px; }
.prompt-row svg { width: 22px; height: 22px; }
.prompt-row label { width: 82px; display: flex; align-items: center; justify-content: flex-end; gap: 2px; }
.prompt-row label:first-of-type { width: 72px; }
.prompt-row .field { width: 57px; }
.raised { border: 1px solid #484848; border-right-color: #1d1d1d; border-bottom-color: #1d1d1d; }
.prompt-row .raised { width: 23px; height: 21px; }
.stackcol { display: flex; flex-direction: column; flex: none; }
.grid-info { width: 100px; padding-top: 4px; gap: 4px; }
.set-keys { width: 44px; height: 44px; margin: 3px 3px 0; }
.set-keys svg { width: 28px; height: 14px; }
.keys { width: 48px; padding-top: 3px; }
.keys button { height: 22px; }
.filters { width: 119px; padding: 3px 0 0 3px; gap: 4px; }
.filters .combo { width: 116px; margin: 0; }
.filter-row { display: flex; }
.filter-row button { height: 21px; }
.filter-row svg { width: 23px; height: 22px; }
.playback { width: 132px; padding: 3px 0 0 4px; }
.play-row { display: flex; align-items: center; height: 22px; }
.play-row > button { width: 24px; }
.play-row > button:last-child { width: 25px; }
.play-row svg { width: 22px; height: 22px; }
.frame { width: 64px; }
.spin { width: 12px; display: flex; flex-direction: column; }
.spin button { height: 9px; }
.spin button::after { content: ""; border: 3px solid transparent; border-bottom-color: #ccc; border-top: 0; }
.spin button:last-child { transform: rotate(180deg); }
.nav-tools { display: grid; grid-template-columns: repeat(4, 23px); grid-auto-rows: 22px; padding: 3px 3px 0 0; }
.nav-tools svg { width: 22px; height: 22px; }

/* taskbar */
.taskbar { display: flex; align-items: center; height: 44px; padding: 3px 2px 1px; background: #d4d0c8; color: #000; box-shadow: inset 0 1px #e8e6e0, inset 0 2px #fff; }
.start, .win { border: 1px solid #fff; border-right: 2px solid #444; border-bottom: 2px solid #444; }
.start { width: 54px; height: 38px; font-weight: bold; gap: 2px; }
.start svg { width: 17px; height: 18px; }
.tasks { flex: 1; display: flex; gap: 2px; padding-left: 9px; }
.tasks button { width: 48px; height: 38px; }
.tasks svg { width: 34px; height: 34px; }
.tasks .pressed { border: 2px solid #444; border-right: 1px solid #fff; border-bottom: 1px solid #fff; background: #fff; }
.adobe { width: 28px; height: 27px; margin-bottom: 4px; color: #fff; font: bold 15px/27px "Noto Sans", sans-serif; }
.dw { background: linear-gradient(#9fc42c, #5d6c0e); }
.fl { background: linear-gradient(#c10e26, #4e070c); }
.lang { width: 20px; height: 22px; line-height: 20px; border-right: 1px solid #999; margin-right: 3px; }
.tray { display: flex; align-items: center; gap: 6px; width: 230px; height: 37px; padding: 0 4px 0 1px; border: 1px solid #888; border-right-color: #fff; border-bottom-color: #fff; }
.tray svg { width: 18px; height: 18px; }
.tray .small { width: 14px; }
.clock { flex: 1; display: flex; flex-direction: column; align-items: center; gap: 2px; }
.tooltip { position: absolute; right: 1px; top: 556px; height: 17px; padding: 0 1px; border: 1px solid #000; background: #ffffe1; color: #000; box-shadow: 2px 2px 2px rgba(0,0,0,.4); }
```

FILE: app.js
```js
// Builds the track bar: one tick per frame, a number every fifth frame.
const ticks = document.getElementById('ticks');
const frames = document.getElementById('frames');
for (let f = 0; f <= 100; f++) {
  const tick = document.createElement('i');
  if (f % 5 === 0) {
    tick.className = 'major';
    const label = document.createElement('span');
    label.textContent = f;
    frames.append(label);
  }
  ticks.append(tick);
}
```
